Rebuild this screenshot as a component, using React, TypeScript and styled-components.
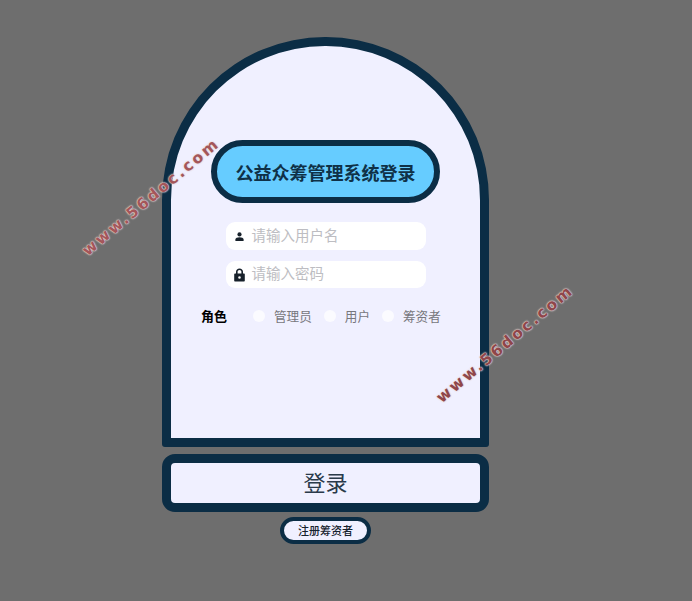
import React from 'react'
import styled, { createGlobalStyle } from 'styled-components'

const GlobalStyle = createGlobalStyle`
  html, body {
    margin: 0;
    padding: 0;
    background: #6e6e6e;
  }
  * {
    box-sizing: border-box;
  }
`

const CJK = `"Noto Sans CJK SC", "Noto Sans", sans-serif`

const Page = styled.div`
  position: relative;
  width: 692px;
  height: 601px;
  overflow: hidden;
  padding: 37px 42px 0 0;
  background: #6e6e6e;
  display: flex;
  flex-direction: column;
  align-items: center;
  font-family: ${CJK};
`

const Card = styled.div`
  width: 327px;
  height: 410px;
  margin-left: 1px;
  background: #f0f0ff;
  border: 9px solid #0b2d45;
  border-radius: 163px 163px 3px 3px;
  display: flex;
  flex-direction: column;
  align-items: center;
  padding-top: 94px;
`

const Title = styled.h1`
  width: 229px;
  height: 63px;
  margin: 0 0 19px;
  background: #66ccff;
  border: 6px solid #0b2d45;
  border-radius: 32px;
  display: flex;
  align-items: center;
  justify-content: center;
  color: #0f3147;
  font-size: 18px;
  font-weight: 700;
  line-height: 1;
`

const Field = styled.div<{ $height: number }>`
  width: 200px;
  height: ${p => p.$height}px;
  margin-bottom: 11px;
  background: #ffffff;
  border-radius: 9px;
  display: flex;
  align-items: center;
  padding-left: 8px;
  gap: 7px;
`

const IconSlot = styled.span`
  width: 11px;
  display: flex;
  justify-content: center;
  color: #17212b;
`

const Placeholder = styled.span`
  color: #bdbdc2;
  font-size: 14.5px;
  line-height: 1;
  padding-bottom: 2px;
`

const RoleRow = styled.div`
  width: 100%;
  margin-top: 4px;
  padding-left: 30px;
  height: 24px;
  display: flex;
  align-items: center;
`

const RoleLabel = styled.span`
  width: 52px;
  color: #000000;
  font-size: 13px;
  font-weight: 700;
`

const Option = styled.label`
  display: flex;
  align-items: center;
  gap: 9px;
  margin-right: 12px;
  color: #77777c;
  font-size: 12.6px;
`

const Radio = styled.span`
  width: 12px;
  height: 12px;
  margin-top: 1px;
  border-radius: 50%;
  background: #fbfbff;
`

const LoginButton = styled.button`
  width: 327px;
  height: 58px;
  margin: 7px 0 0 1px;
  background: #f0f0ff;
  border: 9px solid #0b2d45;
  border-radius: 13px;
  color: #2a3a4a;
  font-family: ${CJK};
  font-size: 22px;
  line-height: 1;
  padding: 0 0 4px;
`

const RegisterButton = styled.button`
  width: 91px;
  height: 27px;
  margin: 5px 0 0 1px;
  background: #f0f0ff;
  border: 4px solid #0b2d45;
  border-radius: 14px;
  color: #15222e;
  font-family: ${CJK};
  font-size: 11px;
  font-weight: 500;
  line-height: 1;
  padding: 0;
`

const Watermark = styled.span<{ $x: number; $y: number; $color: string }>`
  position: absolute;
  left: ${p => p.$x}px;
  top: ${p => p.$y}px;
  transform: translate(-50%, -50%) rotate(-40deg);
  font-family: "DejaVu Sans", sans-serif;
  font-size: 15.5px;
  font-weight: 700;
  letter-spacing: 2.4px;
  line-height: 20px;
  white-space: nowrap;
  color: ${p => p.$color};
  text-shadow: 0 0 2px #e6d5d5, 0 0 2px #e6d5d5, 0 0 1px #e6d5d5;
`

const UserIcon = () => (
  <svg width="9" height="9" viewBox="0 0 9 9" fill="currentColor">
    <circle cx="4.5" cy="2.4" r="2.1" />
    <path d="M0.4 9 V7.6 C0.4 6 2.4 5.2 4.5 5.2 C6.6 5.2 8.6 6 8.6 7.6 V9 Z" />
  </svg>
)

const LockIcon = () => (
  <svg width="11" height="14" viewBox="0 0 11 14" fill="currentColor">
    <path d="M2 6 V3.8 C2 1.8 3.5 0.5 5.5 0.5 C7.5 0.5 9 1.8 9 3.8 V6 H7.4 V3.8 C7.4 2.7 6.6 2 5.5 2 C4.4 2 3.6 2.7 3.6 3.8 V6 Z" />
    <path
      fillRule="evenodd"
      d="M1.2 5.6 H9.8 C10.4 5.6 10.8 6 10.8 6.6 V12.6 C10.8 13.2 10.4 13.6 9.8 13.6 H1.2 C0.6 13.6 0.2 13.2 0.2 12.6 V6.6 C0.2 6 0.6 5.6 1.2 5.6 Z M5.5 8.2 A1.3 1.3 0 1 0 5.5 10.8 A1.3 1.3 0 1 0 5.5 8.2 Z"
    />
  </svg>
)

const roles = ['管理员', '用户', '筹资者']

export default function App() {
  return (
    <Page>
      <GlobalStyle />
      <Card>
        <Title>公益众筹管理系统登录</Title>
        <Field $height={28}>
          <IconSlot>
            <UserIcon />
          </IconSlot>
          <Placeholder>请输入用户名</Placeholder>
        </Field>
        <Field $height={27}>
          <IconSlot>
            <LockIcon />
          </IconSlot>
          <Placeholder>请输入密码</Placeholder>
        </Field>
        <RoleRow>
          <RoleLabel>角色</RoleLabel>
          {roles.map(role => (
            <Option key={role}>
              <Radio />
              {role}
            </Option>
          ))}
        </RoleRow>
      </Card>
      <LoginButton>登录</LoginButton>
      <RegisterButton>注册筹资者</RegisterButton>
      <Watermark $x={151} $y={197} $color="#a4565a">www.56doc.com</Watermark>
      <Watermark $x={505} $y={344} $color="#8f464a">www.56doc.com</Watermark>
    </Page>
  )
}
